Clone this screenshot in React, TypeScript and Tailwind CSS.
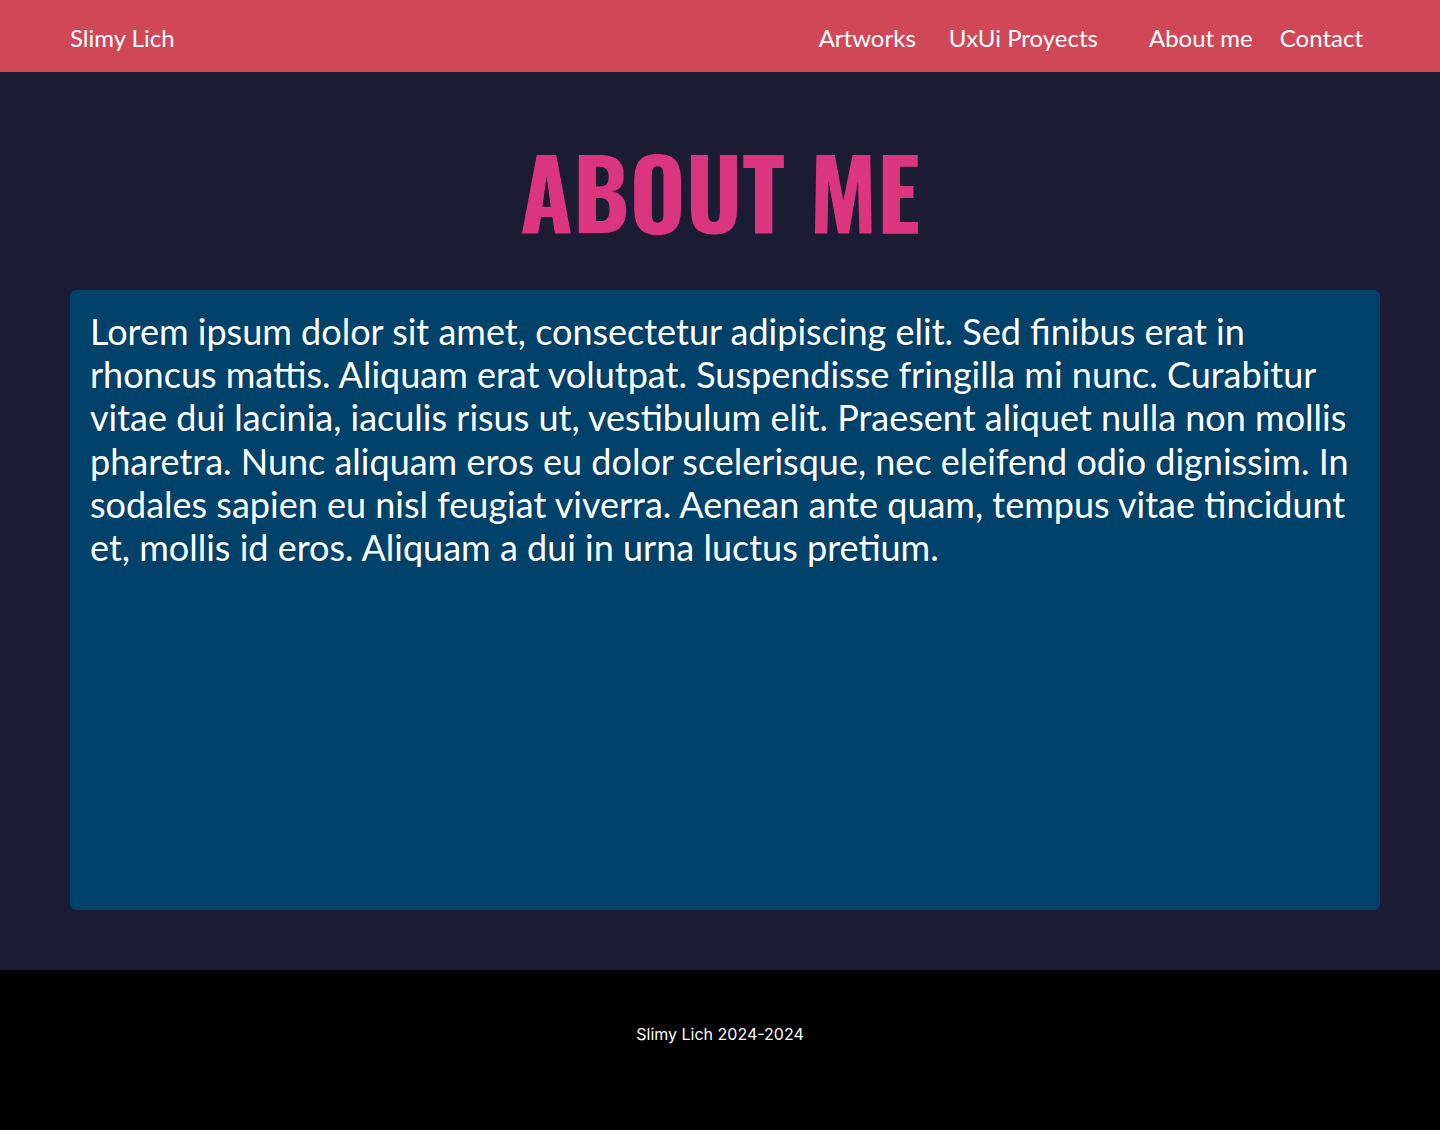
export default function App() {
  return (
    <div className="flex min-h-[1130px] flex-col bg-[#1b1b33] font-['Lato',sans-serif] text-white">
      <header className="flex h-[72px] items-center justify-between bg-[#d04758] px-[70px] pt-1 text-[24px]">
        <a href="#" className="leading-none">
          Slimy Lich
        </a>
        <nav className="mr-[7px] flex items-center leading-none">
          <a href="#">Artworks</a>
          <a href="#" className="ml-[33px]">
            UxUi Proyects
          </a>
          <a href="#" className="ml-[51px]">
            About me
          </a>
          <a href="#" className="ml-[27px]">
            Contact
          </a>
        </nav>
      </header>

      <main className="pb-[60px] pl-[70px] pr-[60px]">
        <h1 className="flex h-[218px] items-center justify-center pr-[10px] pt-[20px] font-['Oswald','Liberation_Sans_Narrow','DejaVu_Sans_Condensed',sans-serif] text-[96px] font-bold leading-none text-[#db3580]">
          ABOUT ME
        </h1>
        <section className="h-[620px] rounded-md bg-[#00426a] px-5 py-5">
          <p className="text-[36px] leading-[1.2]">
            Lorem ipsum dolor sit amet, consectetur adipiscing elit. Sed finibus erat in rhoncus mattis. Aliquam erat
            volutpat. Suspendisse fringilla mi nunc. Curabitur vitae dui lacinia, iaculis risus ut, vestibulum elit.
            Praesent aliquet nulla non mollis pharetra. Nunc aliquam eros eu dolor scelerisque, nec eleifend odio
            dignissim. In sodales sapien eu nisl feugiat viverra. Aenean ante quam, tempus vitae tincidunt et, mollis id
            eros. Aliquam a dui in urna luctus pretium.
          </p>
        </section>
      </main>

      <footer className="flex h-[160px] justify-center bg-black pt-[52px] font-['Inter',sans-serif] text-base text-white">
        <p>Slimy Lich 2024-2024</p>
      </footer>
    </div>
  );
}
